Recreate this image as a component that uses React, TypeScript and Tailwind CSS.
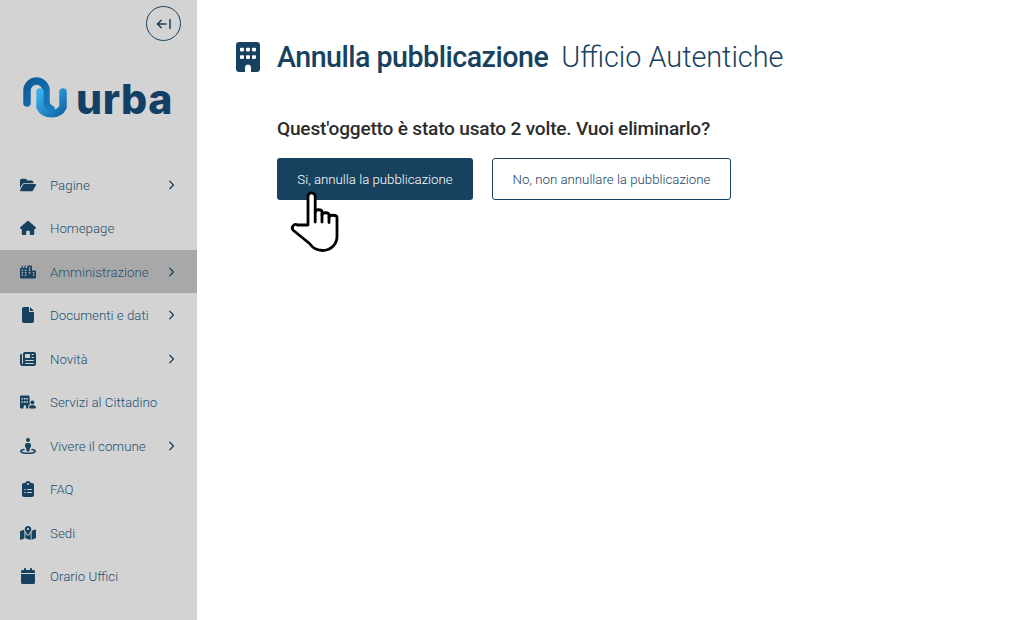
import type { IconType } from "react-icons";
import {
  FaBuilding,
  FaBuildingUser,
  FaCalendar,
  FaChevronRight,
  FaCity,
  FaClipboardList,
  FaFile,
  FaFolderOpen,
  FaHouse,
  FaMapLocationDot,
  FaNewspaper,
  FaStreetView,
} from "react-icons/fa6";

interface MenuItem {
  label: string;
  icon: IconType;
  arrow?: boolean;
  active?: boolean;
}

const menu: MenuItem[] = [
  { label: "Pagine", icon: FaFolderOpen, arrow: true },
  { label: "Homepage", icon: FaHouse },
  { label: "Amministrazione", icon: FaCity, arrow: true, active: true },
  { label: "Documenti e dati", icon: FaFile, arrow: true },
  { label: "Novità", icon: FaNewspaper, arrow: true },
  { label: "Servizi al Cittadino", icon: FaBuildingUser },
  { label: "Vivere il comune", icon: FaStreetView, arrow: true },
  { label: "FAQ", icon: FaClipboardList },
  { label: "Sedi", icon: FaMapLocationDot },
  { label: "Orario Uffici", icon: FaCalendar },
];

function Logo() {
  return (
    <div className="flex h-[44px] items-center pl-[23px]">
      <svg width="44" height="44" viewBox="0 0 44 44" fill="none">
        <defs>
          <linearGradient id="logoA" x1="0" y1="0" x2="1" y2="1">
            <stop offset="0" stopColor="#0d5b99" />
            <stop offset="1" stopColor="#1a7dc0" />
          </linearGradient>
          <linearGradient id="logoB" x1="0" y1="0" x2="1" y2="1">
            <stop offset="0" stopColor="#38b0e8" />
            <stop offset="1" stopColor="#1268ab" />
          </linearGradient>
        </defs>
        <path d="M4 26V13.500a9.500 9.500 0 0 1 19 0V24c0 5 2 7 5 8" stroke="url(#logoA)" strokeWidth="7.500" strokeLinecap="round" />
        <path d="M17 15v15a12.500 11 0 0 0 23 0V15" stroke="url(#logoB)" strokeWidth="7.500" strokeLinecap="round" />
      </svg>
      <span className="ml-[9px] font-['Inter',sans-serif] text-[41px] font-extrabold leading-none tracking-[0.6px] text-[#123f66]">
        urba
      </span>
    </div>
  );
}

function HandCursor() {
  return (
    <svg
      className="absolute left-[13px] top-[31px]"
      width="52"
      height="66"
      viewBox="0 0 52 64"
      fill="white"
      stroke="black"
      strokeWidth="2.800"
      strokeLinejoin="round"
      strokeLinecap="round"
    >
      <path d="M18 35V6.500a3.600 3.600 0 0 1 7.200 0V22c0-3 6.800-3 6.800 0v3c0-3 7-3 7 0v2.500c0-3 8-3 8 0v19c0 8-6.500 14-14.500 14-7 0-10-3-13-7L3.500 40.500c-3-3 .5-7.500 4-5.500z" />
      <path d="M25.200 22v10M32 25v7M39 27.500v5" fill="none" />
    </svg>
  );
}

export default function App() {
  return (
    <div className="flex h-[620px] w-[1031px] overflow-hidden bg-white font-['Roboto',sans-serif] text-[#17425f]">
      <aside className="h-full w-[197px] shrink-0 bg-[#d3d3d3]">
        <div className="flex justify-end pr-[16px] pt-[6px]">
          <button className="flex h-[35px] w-[35px] items-center justify-center rounded-full border border-[#17425f]">
            <svg width="16" height="12" viewBox="0 0 16 12" fill="none" stroke="#17425f" strokeWidth="1.500">
              <path d="M10.500 6H1.500M5.500 2 1.500 6l4 4M14 1v10" />
            </svg>
          </button>
        </div>
        <div className="mt-[36px]">
          <Logo />
        </div>
        <nav className="mt-[41.750px]">
          {menu.map((item) => (
            <div
              key={item.label}
              className={`flex h-[43.5px] items-center pl-[20px] pr-[21px] ${item.active ? "bg-[#a8a8a8]" : ""}`}
            >
              <span className="flex w-[16px] justify-center">
                <item.icon className="text-[16px] text-[#17425f]" />
              </span>
              <span className="ml-[14px] flex-1 whitespace-nowrap pt-[2px] text-[13.300px] font-light text-[#23506f]">
                {item.label}
              </span>
              {item.arrow && <FaChevronRight className="text-[10px] text-[#17425f]" />}
            </div>
          ))}
        </nav>
      </aside>

      <main className="flex-1 pl-[39px] pt-[40px]">
        <div className="flex h-[34px] items-center">
          <FaBuilding preserveAspectRatio="none" className="h-[30px] w-[24px] text-[#17425f]" />
          <h1 className="ml-[17px] whitespace-nowrap text-[28.600px] font-medium tracking-[-0.5px]">
            Annulla pubblicazione
          </h1>
          <span className="ml-[13px] whitespace-nowrap pt-[2px] text-[28.800px] font-light">
            Ufficio Autentiche
          </span>
        </div>
        <div className="ml-[41px] mt-[41px]">
          <p className="text-[19.100px] leading-[28px] font-medium tracking-[-0.2px] text-[#2c2c2c]">
            Quest'oggetto è stato usato 2 volte. Vuoi eliminarlo?
          </p>
          <div className="mt-[15px] flex gap-[19px]">
            <div className="relative">
              <button className="h-[42px] w-[196px] rounded-[3px] bg-[#17425f] pt-[2px] text-[13.250px] font-light text-white">
                Si, annulla la pubblicazione
              </button>
              <HandCursor />
            </div>
            <button className="h-[42px] w-[239px] rounded-[3px] border border-[#17425f] bg-white pt-[2px] text-[13.250px] font-light text-[#17425f]">
              No, non annullare la pubblicazione
            </button>
          </div>
        </div>
      </main>
    </div>
  );
}
